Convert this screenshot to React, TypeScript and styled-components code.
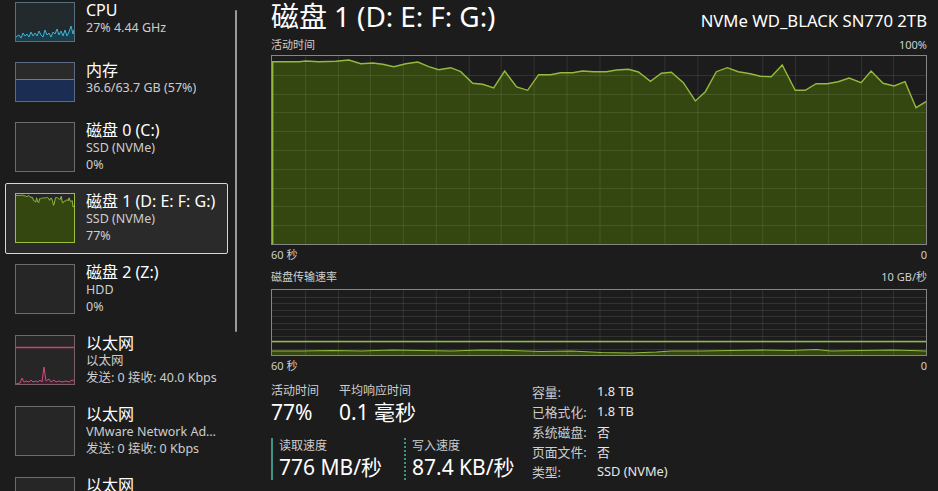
import React from 'react'
import styled, { createGlobalStyle } from 'styled-components'

const GlobalStyle = createGlobalStyle`
  html, body {
    margin: 0;
    padding: 0;
    background: #1c1c1c;
  }
  body {
    font-family: "Noto Sans", "Noto Sans CJK SC", sans-serif;
    color: #ffffff;
  }
`

const Page = styled.div`
  display: flex;
  width: 938px;
  height: 491px;
  overflow: hidden;
  background: #1c1c1c;
`

const Sidebar = styled.aside`
  display: flex;
  width: 240px;
  flex-shrink: 0;
`

const DeviceList = styled.div`
  display: flex;
  flex-direction: column;
  width: 223px;
  margin: -8px 0 0 5px;
`

const ScrollTrack = styled.div`
  margin-left: 7px;
  padding-top: 10px;
`

const ScrollThumb = styled.div`
  width: 2px;
  height: 322px;
  border-radius: 1px;
  background: #9a9a9a;
`

const DeviceItem = styled.div<{ $selected?: boolean }>`
  display: flex;
  gap: 11px;
  padding: 9px;
  border: 1px solid ${(p) => (p.$selected ? '#d6d6d6' : 'transparent')};
  border-radius: 2px;
  background: ${(p) => (p.$selected ? '#2a2a2a' : 'transparent')};
`

const Thumb = styled.div<{ $h: number; $border: string; $bg?: string }>`
  width: 60px;
  height: ${(p) => p.$h}px;
  flex-shrink: 0;
  box-sizing: border-box;
  border: 1px solid ${(p) => p.$border};
  background: ${(p) => p.$bg || '#262626'};
  overflow: hidden;

  svg {
    display: block;
    width: 100%;
    height: 100%;
  }
`

const DeviceText = styled.div`
  display: flex;
  flex-direction: column;
  min-width: 0;
  margin-top: -2px;
`

const DeviceName = styled.div`
  font-size: 16px;
  line-height: 20px;
  color: #ffffff;
  white-space: nowrap;
`

const DeviceSub = styled.div`
  font-size: 12.5px;
  line-height: 16.5px;
  color: #cdcdcd;
  white-space: nowrap;
  overflow: hidden;
  text-overflow: ellipsis;
`

const Main = styled.main`
  display: flex;
  flex-direction: column;
  flex: 1;
  padding: 0 11px 0 31px;
  min-width: 0;
`

const Header = styled.div`
  display: flex;
  justify-content: space-between;
  align-items: baseline;
  height: 34px;
`

const Title = styled.h1`
  margin: 0;
  font-size: 28px;
  font-weight: 400;
  line-height: 32px;
  color: #ffffff;
  letter-spacing: -0.1px;
`

const Model = styled.div`
  font-size: 16.7px;
  color: #ffffff;
`

const AxisRow = styled.div<{ $mt?: number }>`
  display: flex;
  justify-content: space-between;
  font-size: 11px;
  line-height: 14px;
  color: #cfcfcf;
  margin-top: ${(p) => p.$mt ?? 0}px;
`

const ChartBox = styled.div<{ $h: number; $mt?: number }>`
  height: ${(p) => p.$h}px;
  box-sizing: border-box;
  border: 1px solid #858585;
  margin-top: ${(p) => p.$mt ?? 0}px;
  background: #1c1c1c;

  svg {
    display: block;
    width: 100%;
    height: 100%;
  }
`

const Stats = styled.div`
  display: flex;
  margin-top: 10px;
`

const StatColumn = styled.div`
  display: flex;
  flex-direction: column;
  width: 261px;
`

const StatRow = styled.div`
  display: flex;
`

const Stat = styled.div<{ $w: number }>`
  display: flex;
  flex-direction: column;
  width: ${(p) => p.$w}px;
`

const SpeedStat = styled.div<{ $w: number; $dotted?: boolean }>`
  display: flex;
  flex-direction: column;
  width: ${(p) => p.$w}px;
  margin-top: 13px;
  padding-left: 6px;
  border-left: 2px ${(p) => (p.$dotted ? 'dotted' : 'solid')} #3f9488;
`

const StatLabel = styled.div`
  font-size: 12px;
  line-height: 16px;
  color: #cdcdcd;
  white-space: nowrap;
`

const StatValue = styled.div`
  font-size: 21px;
  line-height: 26px;
  color: #ffffff;
  white-space: nowrap;
`

const InfoTable = styled.div`
  display: grid;
  grid-template-columns: 65px auto;
  grid-auto-rows: 20px;
  align-items: center;
  font-size: 12.8px;
  margin-top: -2px;
`

const InfoKey = styled.div`
  color: #cdcdcd;
`

const InfoVal = styled.div`
  color: #e6e6e6;
`

const LINE = '#94b93f'
const FILL = '#344710'

// 活动时间 samples in chart pixels (655 x 189)
const activity: [number, number][] = [
  [0, 5.7], [27, 5.7], [34, 5], [47, 5.7], [64, 5.3], [77, 4], [89, 7.7], [101, 7],
  [111, 8.3], [122, 10.7], [134, 7.7], [146, 6], [157, 10.7], [167, 13.7], [179, 11.7],
  [189, 15.7], [201, 27.3], [211, 28.3], [222, 32], [233, 15], [245, 31], [256, 34.3],
  [267, 18.7], [279, 18.7], [289, 16.7], [301, 16.7], [311, 15], [322, 15.7], [335, 15.7],
  [345, 14], [357, 13.3], [367, 16], [379, 25.3], [390, 17.3], [400, 16.3], [412, 26.7],
  [424, 45], [434, 35.7], [445, 15.7], [456, 11.7], [467, 15.7], [479, 17.7], [489, 20.3],
  [500, 20.7], [511, 9], [524, 34.3], [534, 34.3], [545, 27.7], [556, 27.7], [567, 25.7],
  [578, 22], [590, 26.7], [600, 15], [612, 27.3], [623, 30], [634, 25.7], [645, 51.7],
  [655, 45.7],
]

const transfer: [number, number][] = [
  [0, 61], [30, 61], [60, 60.5], [90, 61], [120, 60], [150, 60.5], [180, 61], [210, 60],
  [240, 60.5], [270, 61.5], [300, 61], [330, 62.5], [360, 63], [385, 62], [400, 61],
  [430, 61], [460, 60.5], [490, 60], [520, 60.5], [545, 59.5], [560, 61], [590, 60.5],
  [620, 60], [640, 60.5], [655, 61],
]

const toPoints = (pts: [number, number][], sx = 1, sy = 1) =>
  pts.map(([x, y]) => `${(x * sx).toFixed(1)},${(y * sy).toFixed(1)}`).join(' ')

const Grid = ({ w, h, rows, cols }: { w: number; h: number; rows: number; cols: number }) => (
  <g stroke="#ffffff" strokeOpacity={0.1} strokeWidth={1}>
    {Array.from({ length: rows - 1 }, (_, i) => {
      const y = Math.round(((i + 1) * h) / rows) + 0.5
      return <line key={`h${i}`} x1={0} x2={w} y1={y} y2={y} />
    })}
    {Array.from({ length: cols - 1 }, (_, i) => {
      const x = Math.round(((i + 1) * w) / cols) + 0.5
      return <line key={`v${i}`} x1={x} x2={x} y1={0} y2={h} />
    })}
  </g>
)

const ActivityChart = () => {
  const w = 655
  const h = 188
  const pts = toPoints(activity)
  return (
    <svg viewBox={`0 0 ${w} ${h}`} preserveAspectRatio="none">
      <polygon points={`0,${h} ${pts} ${w},${h}`} fill={FILL} />
      <Grid w={w} h={h} rows={10} cols={20} />
      <polyline points={pts} fill="none" stroke={LINE} strokeWidth={1.4} />
      <line x1={0.7} x2={0.7} y1={activity[0][1]} y2={h} stroke={LINE} strokeWidth={1.4} />
    </svg>
  )
}

const TransferChart = () => {
  const w = 655
  const h = 65
  const pts = toPoints(transfer)
  return (
    <svg viewBox={`0 0 ${w} ${h}`} preserveAspectRatio="none">
      <polygon points={`0,${h} ${pts} ${w},${h}`} fill={FILL} />
      <Grid w={w} h={h} rows={10} cols={20} />
      <line x1={0} x2={w} y1={51.5} y2={51.5} stroke={LINE} strokeWidth={1.4} />
      <polyline points={pts} fill="none" stroke={LINE} strokeWidth={1.2} />
    </svg>
  )
}

const cpuLine =
  '0,34 3,32 5,35 7,30 9,33 11,31 13,34 15,29 17,33 19,30 21,33 23,28 25,32 27,34 29,27 31,32 33,30 35,34 37,29 39,31 41,26 43,32 45,28 47,33 49,27 51,33 53,29 55,23 57,31 58,27 60,30'

const ethLine =
  '0,48 4,47 6,42 8,46 10,45 13,46 15,44 17,46 20,45 22,46 24,44 26,46 28,31 30,45 33,43 35,46 38,44 40,46 43,45 46,46 50,45 53,46 56,44 58,45 60,43'

const CpuThumb = () => (
  <Thumb $h={40} $border="#56707c" $bg="#232a2e">
    <svg viewBox="0 0 58 38" preserveAspectRatio="none">
      <polygon points={`0,38 ${cpuLine} 60,38`} fill="#1c3c4a" />
      <polyline points={cpuLine} fill="none" stroke="#38b4d8" strokeWidth={1} />
    </svg>
  </Thumb>
)

const MemoryThumb = () => (
  <Thumb $h={40} $border="#5c6a86" $bg="#2a2a2a">
    <svg viewBox="0 0 58 38" preserveAspectRatio="none">
      <rect x={0} y={16} width={58} height={22} fill="#1b2d52" />
      <line x1={0} x2={58} y1={16.5} y2={16.5} stroke="#4a7fd4" strokeWidth={1.2} />
    </svg>
  </Thumb>
)

const DiskThumb = ({ active }: { active?: boolean }) => {
  if (!active) return <Thumb $h={50} $border="#6c6c6c" />
  const pts = toPoints(activity, 58 / 655, 48 / 189)
  return (
    <Thumb $h={50} $border="#9cc23d" $bg="#262626">
      <svg viewBox="0 0 58 48" preserveAspectRatio="none">
        <polygon points={`0,48 ${pts} 58,48`} fill={FILL} />
        <polyline points={pts} fill="none" stroke={LINE} strokeWidth={1} />
      </svg>
    </Thumb>
  )
}

const EthThumb = ({ active }: { active?: boolean }) => {
  if (!active) return <Thumb $h={50} $border="#6c6c6c" />
  return (
    <Thumb $h={50} $border="#7a6068" $bg="#262626">
      <svg viewBox="0 0 58 48" preserveAspectRatio="none">
        <line x1={0} x2={58} y1={11.5} y2={11.5} stroke="#c8456e" strokeWidth={1.3} />
        <polygon points={`0,48 ${ethLine} 60,48`} fill="#3a2230" />
        <polyline points={ethLine} fill="none" stroke="#d24a78" strokeWidth={1} />
      </svg>
    </Thumb>
  )
}

type Device = {
  thumb: React.ReactNode
  name: string
  lines: string[]
  selected?: boolean
}

const devices: Device[] = [
  { thumb: <CpuThumb />, name: 'CPU', lines: ['27% 4.44 GHz'] },
  { thumb: <MemoryThumb />, name: '内存', lines: ['36.6/63.7 GB (57%)'] },
  { thumb: <DiskThumb />, name: '磁盘 0 (C:)', lines: ['SSD (NVMe)', '0%'] },
  {
    thumb: <DiskThumb active />,
    name: '磁盘 1 (D: E: F: G:)',
    lines: ['SSD (NVMe)', '77%'],
    selected: true,
  },
  { thumb: <DiskThumb />, name: '磁盘 2 (Z:)', lines: ['HDD', '0%'] },
  { thumb: <EthThumb active />, name: '以太网', lines: ['以太网', '发送: 0 接收: 40.0 Kbps'] },
  {
    thumb: <EthThumb />,
    name: '以太网',
    lines: ['VMware Network Adapter VMnet8', '发送: 0 接收: 0 Kbps'],
  },
  { thumb: <EthThumb />, name: '以太网', lines: ['VMware Network Adapter VMnet1', '发送: 0 接收: 0 Kbps'] },
]

const info: [string, string][] = [
  ['容量:', '1.8 TB'],
  ['已格式化:', '1.8 TB'],
  ['系统磁盘:', '否'],
  ['页面文件:', '否'],
  ['类型:', 'SSD (NVMe)'],
]

const App = () => {
  return (
    <Page>
      <GlobalStyle />
      <Sidebar>
        <DeviceList>
          {devices.map((d, i) => (
            <DeviceItem key={i} $selected={d.selected}>
              {d.thumb}
              <DeviceText>
                <DeviceName>{d.name}</DeviceName>
                {d.lines.map((l, j) => (
                  <DeviceSub key={j}>{l}</DeviceSub>
                ))}
              </DeviceText>
            </DeviceItem>
          ))}
        </DeviceList>
        <ScrollTrack>
          <ScrollThumb />
        </ScrollTrack>
      </Sidebar>

      <Main>
        <Header>
          <Title>磁盘 1 (D: E: F: G:)</Title>
          <Model>NVMe WD_BLACK SN770 2TB</Model>
        </Header>
        <AxisRow $mt={4}>
          <span>活动时间</span>
          <span>100%</span>
        </AxisRow>
        <ChartBox $h={190} $mt={3}>
          <ActivityChart />
        </ChartBox>
        <AxisRow $mt={3}>
          <span>60 秒</span>
          <span>0</span>
        </AxisRow>
        <AxisRow $mt={8}>
          <span>磁盘传输速率</span>
          <span>10 GB/秒</span>
        </AxisRow>
        <ChartBox $h={67} $mt={5}>
          <TransferChart />
        </ChartBox>
        <AxisRow $mt={3}>
          <span>60 秒</span>
          <span>0</span>
        </AxisRow>

        <Stats>
          <StatColumn>
            <StatRow>
              <Stat $w={68}>
                <StatLabel>活动时间</StatLabel>
                <StatValue>77%</StatValue>
              </Stat>
              <Stat $w={120}>
                <StatLabel>平均响应时间</StatLabel>
                <StatValue>0.1 毫秒</StatValue>
              </Stat>
            </StatRow>
            <StatRow>
              <SpeedStat $w={125}>
                <StatLabel>读取速度</StatLabel>
                <StatValue>776 MB/秒</StatValue>
              </SpeedStat>
              <SpeedStat $w={120} $dotted>
                <StatLabel>写入速度</StatLabel>
                <StatValue>87.4 KB/秒</StatValue>
              </SpeedStat>
            </StatRow>
          </StatColumn>
          <InfoTable>
            {info.map(([k, v]) => (
              <React.Fragment key={k}>
                <InfoKey>{k}</InfoKey>
                <InfoVal>{v}</InfoVal>
              </React.Fragment>
            ))}
          </InfoTable>
        </Stats>
      </Main>
    </Page>
  )
}

export default App
